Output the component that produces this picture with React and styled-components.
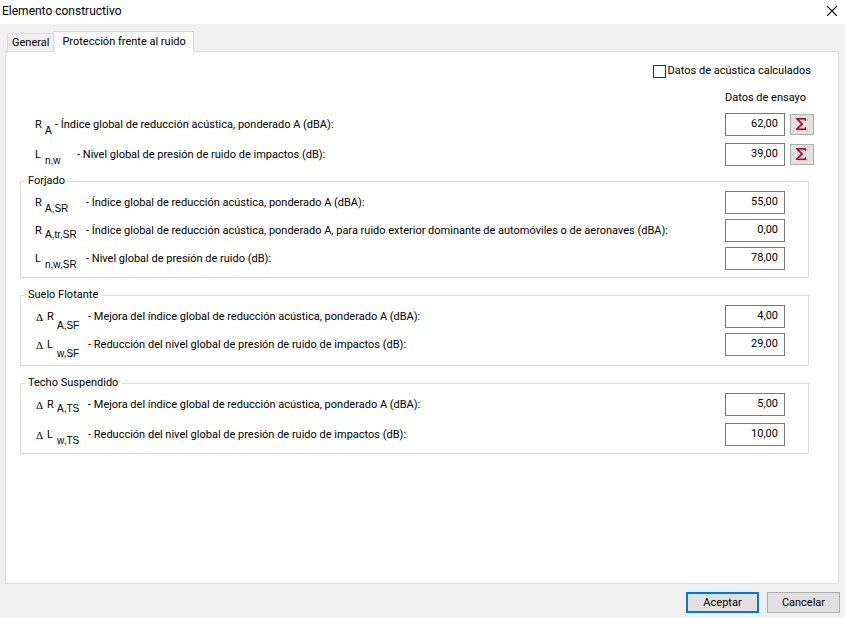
import React from "react";
import styled, { createGlobalStyle } from "styled-components";

const MAIN_ROWS = [
  { id: "ra", base: "R", sub: "A", drop: "mid", width: 20, text: "Índice global de reducción acústica, ponderado A (dBA):", value: "62,00" },
  { id: "lnw", base: "L", sub: "n,w", drop: "mid", width: 42, text: "Nivel global de presión de ruido de impactos (dB):", value: "39,00" },
];

const GROUPS = [
  {
    title: "Forjado",
    gap: 5,
    bottom: 7,
    width: 51,
    rows: [
      { id: "rasr", base: "R", sub: "A,SR", drop: "mid", text: "Índice global de reducción acústica, ponderado A (dBA):", value: "55,00" },
      { id: "ratrsr", base: "R", sub: "A,tr,SR", drop: "low", text: "Índice global de reducción acústica, ponderado A, para ruido exterior dominante de automóviles o de aeronaves (dBA):", value: "0,00" },
      { id: "lnwsr", base: "L", sub: "n,w,SR", drop: "mid", text: "Nivel global de presión de ruido (dB):", value: "78,00" },
    ],
  },
  {
    title: "Suelo Flotante",
    gap: 5,
    bottom: 9,
    width: 53,
    rows: [
      { id: "rasf", delta: true, base: "R", sub: "A,SF", drop: "high", text: "Mejora del índice global de reducción acústica, ponderado A (dBA):", value: "4,00" },
      { id: "lwsf", delta: true, base: "L", sub: "w,SF", drop: "high", text: "Reducción del nivel global de presión de ruido de impactos (dB):", value: "29,00" },
    ],
  },
  {
    title: "Techo Suspendido",
    gap: 7,
    bottom: 7,
    width: 53,
    rows: [
      { id: "rats", delta: true, base: "R", sub: "A,TS", drop: "low", text: "Mejora del índice global de reducción acústica, ponderado A (dBA):", value: "5,00" },
      { id: "lwts", delta: true, base: "L", sub: "w,TS", drop: "mid", text: "Reducción del nivel global de presión de ruido de impactos (dB):", value: "10,00" },
    ],
  },
];

// How far a subscript hangs below its letter
const DROP = {
  low: 4,
  mid: 6,
  high: 9,
};

function App() {
  return (
    <Dialog>
      <GlobalStyle />
      <TitleBar>
        <Title>Elemento constructivo</Title>
        <CloseButton type="button" aria-label="Cerrar">
          <svg width="10" height="10" viewBox="0 0 10 10">
            <path d="M0 0L10 10M10 0L0 10" stroke="#000" strokeWidth="1.2" />
          </svg>
        </CloseButton>
      </TitleBar>
      <TabList role="tablist">
        <Tab type="button" role="tab" aria-selected="false">General</Tab>
        <Tab type="button" role="tab" aria-selected="true" $active>Protección frente al ruido</Tab>
      </TabList>
      <Panel role="tabpanel">
        <CheckLabel>
          <CheckBox type="checkbox" />
          Datos de acústica calculados
        </CheckLabel>
        <ColumnTitle>Datos de ensayo</ColumnTitle>
        <Rows $gap={7}>
          {MAIN_ROWS.map((row) => (
            <FieldRow key={row.id} {...row} withSum />
          ))}
        </Rows>
        <Groups>
          {GROUPS.map(({ title, gap, bottom, width, rows }) => (
            <Group key={title} $bottom={bottom}>
              <Legend>{title}</Legend>
              <Rows $gap={gap}>
                {rows.map((row) => (
                  <FieldRow key={row.id} width={width} {...row} />
                ))}
              </Rows>
            </Group>
          ))}
        </Groups>
      </Panel>
      <Footer>
        <Button type="button" $primary>Aceptar</Button>
        <Button type="button">Cancelar</Button>
      </Footer>
    </Dialog>
  );
}

function FieldRow({ id, delta, base, sub, drop, width, text, value, withSum }) {
  return (
    <Row>
      <RowLabel htmlFor={id}>
        <Symbol $width={width}>
          {delta && <Delta>Δ</Delta>}
          <Base>{base}</Base>
          <Sub $drop={DROP[drop]}>{sub}</Sub>
        </Symbol>
        <span>- {text}</span>
      </RowLabel>
      <NumberField id={id} type="text" defaultValue={value} />
      {withSum && (
        <SumButton type="button" aria-label="Calcular">
          <SigmaIcon />
        </SumButton>
      )}
    </Row>
  );
}

function SigmaIcon() {
  return (
    <svg width="12" height="13" viewBox="0 0 12 13">
      <path d="M3 1H12V2.5H3ZM4 3L7.5 6.5L4 10H3L6 6.5ZM2 11H12V12.5H2Z" fill="#f4a58c" />
      <path d="M0 0H10V3H9L8.5 1.5H3L7.2 6L2.5 10.5H8.5L9 9H10V12H0V10.8L4.8 6L0 1Z" fill="#a80f2b" />
    </svg>
  );
}

const GlobalStyle = createGlobalStyle`
  * {
    box-sizing: border-box;
  }

  body {
    margin: 0;
    background: #f0f0f0;
    color: #000000;
    font-family: Roboto, sans-serif;
    font-size: 11px;
    line-height: 14px;
  }

  button,
  input {
    margin: 0;
    padding: 0;
    color: inherit;
    font: inherit;
  }
`;

const Dialog = styled.main`
  display: flex;
  flex-direction: column;
  min-height: 100vh;
`;

const TitleBar = styled.header`
  display: flex;
  align-items: center;
  justify-content: space-between;
  height: 24px;
  padding: 0 8px 2px 2px;
  background: #ffffff;
`;

const Title = styled.h1`
  margin: 0;
  font-size: 12px;
  font-weight: 400;
`;

const CloseButton = styled.button`
  display: flex;
  border: none;
  background: none;
`;

const TabList = styled.div`
  display: flex;
  align-items: flex-end;
  padding: 7px 7px 0;
`;

const Tab = styled.button`
  height: ${({ $active }) => ($active ? 21 : 18)}px;
  margin-bottom: ${({ $active }) => ($active ? -1 : 0)}px;
  padding: ${({ $active }) => ($active ? "0 7px 1px 8px" : "0 4px")};
  background: ${({ $active }) => ($active ? "#ffffff" : "#f0f0f0")};
  border: 1px solid #d9d9d9;
  border-bottom: none;
  border-right-width: ${({ $active }) => ($active ? 1 : 0)}px;
  white-space: nowrap;
  z-index: 1;
`;

const Panel = styled.section`
  display: flex;
  flex: 1;
  flex-direction: column;
  margin: 0 6px 0 5px;
  padding: 11px 24px 11px 14px;
  background: #ffffff;
  border: 1px solid #dcdcdc;
`;

const CheckLabel = styled.label`
  display: flex;
  align-items: center;
  align-self: flex-end;
  gap: 2px;
  height: 16px;
  margin-right: 3px;
`;

const CheckBox = styled.input`
  width: 13px;
  height: 13px;
  appearance: none;
  background: #ffffff;
  border: 1px solid #333333;

  &:checked {
    background: #333333;
  }
`;

const ColumnTitle = styled.div`
  align-self: flex-end;
  height: 15px;
  margin: 12px 8px 7px 0;
`;

const Rows = styled.div`
  display: flex;
  flex-direction: column;
  gap: ${({ $gap }) => $gap}px;
`;

const Row = styled.div`
  display: flex;
  align-items: center;
  min-height: 23px;
`;

const RowLabel = styled.label`
  display: flex;
  flex: 1;
  padding-left: 15px;

  fieldset & {
    padding-left: 14px;
  }
`;

const Symbol = styled.span`
  display: flex;
  flex: none;
  width: ${({ $width }) => $width}px;
`;

const Base = styled.span`
  width: 10px;
`;

const Delta = styled(Base)`
  width: 12px;
  padding-left: 1px;
  font-family: "Liberation Serif", serif;
`;

const Sub = styled.span`
  height: 14px;
  margin: ${({ $drop }) => `${$drop}px 0 -${$drop}px`};
  font-family: "Liberation Sans", sans-serif;
  font-size: 10px;
`;

const NumberField = styled.input`
  width: 60px;
  height: 23px;
  padding: 0 6px 2px;
  background: #ffffff;
  border: 1px solid #7a7a7a;
  text-align: right;
`;

const SumButton = styled.button`
  display: flex;
  align-items: center;
  justify-content: center;
  width: 24px;
  height: 21px;
  margin-left: 5px;
  background: #e1e1e1;
  border: 1px solid #adadad;
`;

const Groups = styled.div`
  display: flex;
  flex-direction: column;
  gap: 10px;
  margin: 8px 5px 0 0;
`;

const Group = styled.fieldset`
  min-width: 0;
  margin: 0;
  padding: 3px 23px ${({ $bottom }) => $bottom}px 0;
  border: 1px solid #dcdcdc;
`;

const Legend = styled.legend`
  margin-left: 4px;
  padding: 0 3px;
`;

const Footer = styled.footer`
  display: flex;
  justify-content: flex-end;
  gap: 8px;
  padding: 8px 5px 5px;
`;

const Button = styled.button`
  width: 73px;
  height: 21px;
  background: #e1e1e1;
  border: ${({ $primary }) => ($primary ? "2px solid #0078d7" : "1px solid #adadad")};
`;

export default App;
